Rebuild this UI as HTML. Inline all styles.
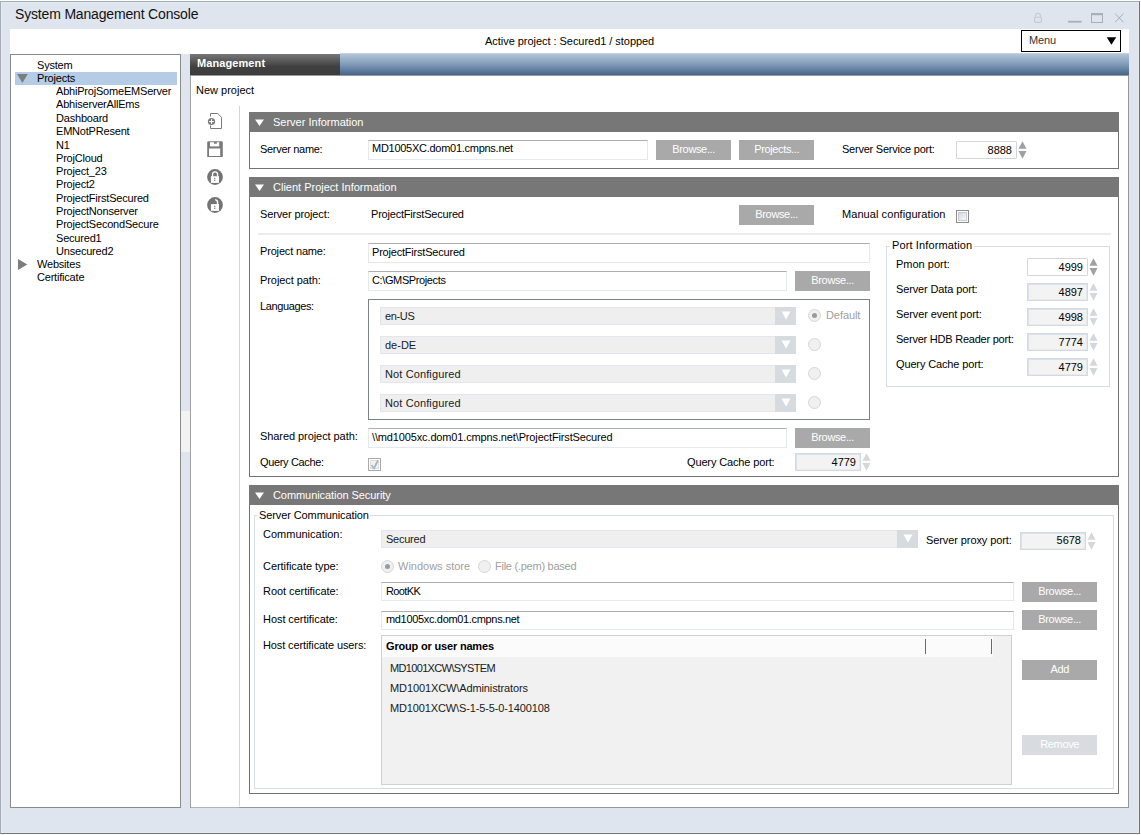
<!DOCTYPE html>
<html><head><meta charset="utf-8">
<style>
html,body{margin:0;padding:0;width:1141px;height:835px;overflow:hidden;background:#fff;}
*{box-sizing:border-box;}
.a{position:absolute;}
.t{position:absolute;font-family:"Liberation Sans",sans-serif;font-size:11px;line-height:13px;white-space:nowrap;color:#000;}
.hdr{position:absolute;background:#777;height:20px;}
.box{position:absolute;border:1px solid #727272;background:#fff;}
.inp{position:absolute;border:1px solid #abadb3;border-color:#abadb3 #e3e9ef #e3e9ef #e3e9ef;background:#fff;}
.dis{position:absolute;border:1px solid #d4dae1;background:#f3f3f3;box-shadow:inset 1px 1px 0 #d9e2ec, inset -1px -1px 0 #e6e9ed;}
.btn{position:absolute;background:#a9a9a9;color:#fff;font-family:"Liberation Sans",sans-serif;font-size:11px;line-height:19px;text-align:center;white-space:nowrap;letter-spacing:-0.35px;text-indent:0.35px;}
.combo{position:absolute;background:#efefef;border:1px solid #e3e6ea;}
.radio{position:absolute;width:13px;height:13px;border-radius:50%;border:1px solid #d6d6d6;background:#f0f0f0;}
.grp{position:absolute;border:1px solid #d8dde2;}
</style></head><body>
<!-- window -->
<div class="a" style="left:0;top:1px;width:1140px;height:833px;border:1px solid;border-color:#a4acb6 #707479 #747474 #a6acb4;background:#dfe5ef;box-shadow:inset 1px 1px 0 #e4e9f2, inset -1px -1px 0 #e6ebf3;"></div>
<div class="t" style="left:15px;top:6px;font-size:14px;letter-spacing:-0.17px;line-height:17px;color:#111;">System Management Console</div>

<!-- title bar icons -->
<svg class="a" style="left:1030px;top:10px;" width="100" height="16">
 <path d="M5.6,7 V5.6 A2.4,2.4 0 0 1 10.4,5.6 V7" fill="none" stroke="#c3cad3" stroke-width="1.1"/>
 <rect x="4.6" y="7.2" width="6.8" height="5.2" rx="0.8" fill="none" stroke="#c3cad3" stroke-width="1.1"/>
 <rect x="38" y="10.8" width="13.6" height="1.8" fill="#a8afb8"/>
 <rect x="61.5" y="3.5" width="11" height="9" fill="none" stroke="#a8afb8" stroke-width="1"/>
 <rect x="61" y="3" width="12" height="2.2" fill="#a8afb8"/>
 <path d="M85.2,3.6 L93.4,12.2 M93.4,3.6 L85.2,12.2" stroke="#a8afb8" stroke-width="1"/>
</svg>

<!-- white header strip -->
<div class="a" style="left:10px;top:29px;width:1119px;height:25px;background:#fff;"></div>
<div class="t" style="left:485px;top:35px;letter-spacing:-0.04px;">Active project : Secured1 / stopped</div>
<div class="a" style="left:1021px;top:30px;width:100px;height:22px;border:1px solid #000;background:#fff;"></div>
<div class="t" style="left:1029px;top:34px;color:#333;letter-spacing:-0.13px;">Menu</div>
<svg class="a" style="left:1106px;top:37px;" width="11" height="9"><polygon points="0.7,0.2 10.2,0.2 5.45,7.8" fill="#000"/></svg>


<!-- tree panel -->
<div class="box" style="left:10px;top:54px;width:171px;height:754px;border-color:#8a8a8a;"></div>
<div class="a" style="left:15px;top:72px;width:162px;height:13px;background:#b4cce6;"></div>

<!-- tree items -->
<svg class="a" style="left:17px;top:74px;" width="12" height="10"><polygon points="0,0 10.8,0 5.4,9" fill="#7d7d7d"/></svg>
<svg class="a" style="left:18px;top:259px;" width="10" height="12"><polygon points="0,0 9.3,5.5 0,11" fill="#7d7d7d"/></svg>
<div class="t" style="left:37px;top:59px;letter-spacing:-0.2px;">System</div>
<div class="t" style="left:37px;top:72px;letter-spacing:-0.2px;">Projects</div>
<div class="t" style="left:56px;top:85px;letter-spacing:-0.2px;">AbhiProjSomeEMServer</div>
<div class="t" style="left:56px;top:98px;letter-spacing:-0.2px;">AbhiserverAllEms</div>
<div class="t" style="left:56px;top:112px;letter-spacing:-0.2px;">Dashboard</div>
<div class="t" style="left:56px;top:125px;letter-spacing:-0.2px;">EMNotPResent</div>
<div class="t" style="left:56px;top:139px;letter-spacing:-0.2px;">N1</div>
<div class="t" style="left:56px;top:152px;letter-spacing:-0.2px;">ProjCloud</div>
<div class="t" style="left:56px;top:165px;letter-spacing:-0.2px;">Project_23</div>
<div class="t" style="left:56px;top:178px;letter-spacing:-0.2px;">Project2</div>
<div class="t" style="left:56px;top:192px;letter-spacing:-0.2px;">ProjectFirstSecured</div>
<div class="t" style="left:56px;top:205px;letter-spacing:-0.2px;">ProjectNonserver</div>
<div class="t" style="left:56px;top:218px;letter-spacing:-0.2px;">ProjectSecondSecure</div>
<div class="t" style="left:56px;top:232px;letter-spacing:-0.2px;">Secured1</div>
<div class="t" style="left:56px;top:245px;letter-spacing:-0.2px;">Unsecured2</div>
<div class="t" style="left:37px;top:258px;letter-spacing:-0.2px;">Websites</div>
<div class="t" style="left:37px;top:271px;letter-spacing:-0.2px;">Certificate</div>

<!-- management panel -->
<div class="box" style="left:190px;top:54px;width:939px;height:754px;border-color:#969696;"></div>
<div class="a" style="left:190px;top:54px;width:150px;height:21px;background:linear-gradient(#777,#404040 60%,#3c3c3c);"></div>
<div class="a" style="left:340px;top:53px;width:789px;height:1px;background:#c8cfd8;"></div>
<div class="a" style="left:340px;top:54px;width:789px;height:21px;background:linear-gradient(#b3c5d9,#7f9ab8 50%,#46658b);"></div>
<div class="a" style="left:190px;top:75px;width:939px;height:1px;background:#9a9a9a;"></div>
<div class="t" style="left:197px;top:57px;font-weight:bold;color:#fff;letter-spacing:0.09px;">Management</div>
<div class="t" style="left:196px;top:84px;">New project</div>

<!-- toolbar icons -->
<svg class="a" style="left:203px;top:108px;" width="25" height="110">
 <g fill="none" stroke="#7a7a7a" stroke-width="1">
  <path d="M7.5,8.5 V5.5 H14.7 L18.5,9.3 V20.5 H7.5 V17.5"/>
 </g>
 <circle cx="8.5" cy="13.5" r="3.6" fill="#7a7a7a"/>
 <rect x="8" y="11.2" width="1.1" height="4.6" fill="#fff"/>
 <rect x="6.2" y="13" width="4.6" height="1.1" fill="#fff"/>
 <!-- save -->
 <path d="M4.2,34 L5,33.2 H19 L19.8,34 V49 H4.2 Z" fill="#7a7a7a"/>
 <rect x="7" y="34.2" width="9.2" height="4.2" fill="#fff"/>
 <rect x="11" y="34" width="2.8" height="1.7" fill="#7a7a7a"/>
 <rect x="6" y="40.5" width="11.2" height="7.5" fill="#fff"/>
 <!-- lock -->
 <circle cx="12" cy="69" r="7.9" fill="#747474"/>
 <path d="M9.55,68.4 V66.3 A2.5,2.5 0 0 1 14.55,66.3 V68.4" fill="none" stroke="#fff" stroke-width="1.3"/>
 <rect x="7.9" y="68.2" width="8.1" height="6.7" fill="#fff"/>
 <rect x="11.2" y="69.8" width="1.1" height="1.3" fill="#747474"/>
 <rect x="11.2" y="71.7" width="1.1" height="1.3" fill="#747474"/>
 <!-- unlock -->
 <circle cx="12" cy="97" r="7.9" fill="#747474"/>
 <path d="M14.55,96.4 V94.2 Q14.55,92.2 12.2,91.6" fill="none" stroke="#fff" stroke-width="1.4"/>
 <rect x="7.9" y="96.1" width="8.1" height="6.8" fill="#fff"/>
 <rect x="11.2" y="97.8" width="1.1" height="1.3" fill="#747474"/>
 <rect x="11.2" y="99.7" width="1.1" height="1.3" fill="#747474"/>
</svg>

<!-- vertical separator -->
<div class="a" style="left:190px;top:76px;width:1px;height:731px;background:#a2a2a2;"></div>
<div class="a" style="left:191px;top:807px;width:48px;height:1px;background:#b2b2b2;"></div>
<div class="a" style="left:239px;top:106px;width:1px;height:700px;background:#d4d4d4;"></div>
<div class="a" style="left:181px;top:411px;width:9px;height:41px;background:#f2f2f2;"></div>

<div class="box" style="left:249px;top:112px;width:870px;height:57px;"></div>
<div class="hdr" style="left:249px;top:112px;width:870px;"></div>
<svg class="a" style="left:255px;top:119px;" width="10" height="8"><polygon points="0,0.5 9,0.5 4.5,7" fill="#fff"/></svg>
<div class="t" style="left:273px;top:116px;color:#fff;">Server Information</div>
<div class="t" style="left:260px;top:143px;letter-spacing:-0.31px;">Server name:</div>
<div class="inp" style="left:368px;top:140px;width:280px;height:20px;"></div>
<div class="t" style="left:372px;top:142px;letter-spacing:-0.27px;">MD1005XC.dom01.cmpns.net</div>
<div class="btn" style="left:656px;top:140px;width:75px;height:20px;">Browse...</div>
<div class="btn" style="left:739px;top:140px;width:75px;height:20px;">Projects...</div>
<div class="t" style="left:842px;top:143px;letter-spacing:-0.23px;">Server Service port:</div>
<div class="a" style="left:956px;top:141px;width:61px;height:18px;border:1px solid #d6d6d6;border-radius:1px;"></div>
<div class="t" style="left:956px;top:144px;width:56px;text-align:right;">8888</div>
<svg class="a" style="left:1018px;top:141px;" width="10" height="18"><polygon points="4.5,0.2 8.5,7.8 0.5,7.8" fill="#a0a0a0"/><polygon points="0.5,10 8.5,10 4.5,17.7" fill="#a0a0a0"/></svg>
<div class="box" style="left:249px;top:177px;width:870px;height:300px;"></div>
<div class="hdr" style="left:249px;top:177px;width:870px;"></div>
<svg class="a" style="left:255px;top:184px;" width="10" height="8"><polygon points="0,0.5 9,0.5 4.5,7" fill="#fff"/></svg>
<div class="t" style="left:273px;top:181px;color:#fff;">Client Project Information</div>
<div class="t" style="left:260px;top:208px;letter-spacing:-0.13px;">Server project:</div>
<div class="t" style="left:371px;top:208px;letter-spacing:-0.2px;">ProjectFirstSecured</div>
<div class="btn" style="left:739px;top:205px;width:75px;height:20px;">Browse...</div>
<div class="t" style="left:842px;top:208px;letter-spacing:0.07px;">Manual configuration</div>
<div class="a" style="left:956px;top:210px;width:13px;height:13px;border:1px solid #8c8c8c;background:#fff;"></div>
<div class="a" style="left:958px;top:212px;width:9px;height:9px;border:1px solid #c8ccd2;background:linear-gradient(135deg,#d3d8df,#f8f8f8);"></div>
<div class="a" style="left:258px;top:233px;width:853px;height:2px;background:#ededed;"></div>
<div class="t" style="left:260px;top:245px;letter-spacing:-0.17px;">Project name:</div>
<div class="inp" style="left:368px;top:243px;width:502px;height:20px;"></div>
<div class="t" style="left:372px;top:246px;letter-spacing:-0.2px;">ProjectFirstSecured</div>
<div class="t" style="left:260px;top:274px;letter-spacing:-0.07px;">Project path:</div>
<div class="inp" style="left:368px;top:271px;width:419px;height:20px;"></div>
<div class="t" style="left:372px;top:274px;letter-spacing:-0.38px;">C:\GMSProjects</div>
<div class="btn" style="left:795px;top:271px;width:75px;height:20px;">Browse...</div>
<div class="t" style="left:260px;top:300px;letter-spacing:-0.37px;">Languages:</div>
<div class="a" style="left:368px;top:299px;width:502px;height:121px;border:1px solid #7c8188;"></div>
<div class="combo" style="left:380px;top:307px;width:416px;height:18px;"></div>
<div class="a" style="left:775px;top:307px;width:21px;height:18px;background:#d6dbe0;"></div>
<svg class="a" style="left:781px;top:311px;" width="10" height="9"><polygon points="0.5,0.5 9.5,0.5 5,8.5" fill="#fff"/></svg>
<div class="t" style="left:385px;top:310px;color:#1a1a1a;letter-spacing:-0.36px;">en-US</div>
<div class="radio" style="left:808px;top:309px;"></div>
<div class="combo" style="left:380px;top:336px;width:416px;height:18px;"></div>
<div class="a" style="left:775px;top:336px;width:21px;height:18px;background:#d6dbe0;"></div>
<svg class="a" style="left:781px;top:340px;" width="10" height="9"><polygon points="0.5,0.5 9.5,0.5 5,8.5" fill="#fff"/></svg>
<div class="t" style="left:385px;top:339px;color:#1a1a1a;">de-DE</div>
<div class="radio" style="left:808px;top:338px;"></div>
<div class="combo" style="left:380px;top:365px;width:416px;height:18px;"></div>
<div class="a" style="left:775px;top:365px;width:21px;height:18px;background:#d6dbe0;"></div>
<svg class="a" style="left:781px;top:369px;" width="10" height="9"><polygon points="0.5,0.5 9.5,0.5 5,8.5" fill="#fff"/></svg>
<div class="t" style="left:385px;top:368px;color:#1a1a1a;letter-spacing:0.12px;">Not Configured</div>
<div class="radio" style="left:808px;top:367px;"></div>
<div class="combo" style="left:380px;top:394px;width:416px;height:18px;"></div>
<div class="a" style="left:775px;top:394px;width:21px;height:18px;background:#d6dbe0;"></div>
<svg class="a" style="left:781px;top:398px;" width="10" height="9"><polygon points="0.5,0.5 9.5,0.5 5,8.5" fill="#fff"/></svg>
<div class="t" style="left:385px;top:397px;color:#1a1a1a;letter-spacing:0.12px;">Not Configured</div>
<div class="radio" style="left:808px;top:396px;"></div>
<div class="a" style="left:812px;top:313px;width:5px;height:5px;border-radius:50%;background:#9a9a9a;"></div>
<div class="t" style="left:826px;top:309px;color:#a0a0a0;letter-spacing:-0.08px;">Default</div>
<div class="t" style="left:260px;top:430px;letter-spacing:-0.07px;">Shared project path:</div>
<div class="inp" style="left:368px;top:428px;width:419px;height:20px;"></div>
<div class="t" style="left:372px;top:431px;letter-spacing:-0.14px;">\\md1005xc.dom01.cmpns.net\ProjectFirstSecured</div>
<div class="btn" style="left:795px;top:428px;width:75px;height:20px;">Browse...</div>
<div class="t" style="left:260px;top:456px;letter-spacing:-0.35px;">Query Cache:</div>
<div class="a" style="left:368px;top:458px;width:13px;height:13px;border:1px solid #aaaaaa;background:#fff;"></div>
<div class="a" style="left:370px;top:460px;width:9px;height:9px;border:1px solid #dedede;background:#f1f1f1;"></div>
<svg class="a" style="left:368px;top:458px;" width="13" height="13"><path d="M4,7.8 L6,10.3 L9.6,3" fill="none" stroke="#a4b7cb" stroke-width="1.8" stroke-linecap="round"/></svg>
<div class="t" style="left:687px;top:456px;letter-spacing:-0.14px;">Query Cache port:</div>
<div class="dis" style="left:795px;top:453px;width:66px;height:18px;"></div>
<div class="t" style="left:795px;top:456px;width:61px;text-align:right;">4779</div>
<svg class="a" style="left:862px;top:453px;" width="10" height="18"><polygon points="4.5,0.2 8.5,7.8 0.5,7.8" fill="#d3d8de"/><polygon points="0.5,10 8.5,10 4.5,17.7" fill="#d3d8de"/></svg>
<div class="grp" style="left:886px;top:246px;width:224px;height:141px;"></div>
<div class="a" style="left:890px;top:243px;width:84px;height:6px;background:#fff;"></div>
<div class="t" style="left:892px;top:239px;letter-spacing:0.12px;">Port Information</div>
<div class="t" style="left:896px;top:258px;">Pmon port:</div>
<div class="a" style="left:1027px;top:258px;width:61px;height:18px;border:1px solid #d6d6d6;border-radius:1px;"></div>
<div class="t" style="left:1027px;top:261px;width:56px;text-align:right;">4999</div>
<svg class="a" style="left:1089px;top:258px;" width="10" height="18"><polygon points="4.5,0.2 8.5,7.8 0.5,7.8" fill="#a0a0a0"/><polygon points="0.5,10 8.5,10 4.5,17.7" fill="#a0a0a0"/></svg>
<div class="t" style="left:896px;top:283px;letter-spacing:-0.13px;">Server Data port:</div>
<div class="dis" style="left:1027px;top:283px;width:61px;height:18px;"></div>
<div class="t" style="left:1027px;top:286px;width:56px;text-align:right;">4897</div>
<svg class="a" style="left:1089px;top:283px;" width="10" height="18"><polygon points="4.5,0.2 8.5,7.8 0.5,7.8" fill="#d3d8de"/><polygon points="0.5,10 8.5,10 4.5,17.7" fill="#d3d8de"/></svg>
<div class="t" style="left:896px;top:308px;letter-spacing:-0.10px;">Server event port:</div>
<div class="dis" style="left:1027px;top:308px;width:61px;height:18px;"></div>
<div class="t" style="left:1027px;top:311px;width:56px;text-align:right;">4998</div>
<svg class="a" style="left:1089px;top:308px;" width="10" height="18"><polygon points="4.5,0.2 8.5,7.8 0.5,7.8" fill="#d3d8de"/><polygon points="0.5,10 8.5,10 4.5,17.7" fill="#d3d8de"/></svg>
<div class="t" style="left:896px;top:333px;letter-spacing:-0.23px;">Server HDB Reader port:</div>
<div class="dis" style="left:1027px;top:333px;width:61px;height:18px;"></div>
<div class="t" style="left:1027px;top:336px;width:56px;text-align:right;">7774</div>
<svg class="a" style="left:1089px;top:333px;" width="10" height="18"><polygon points="4.5,0.2 8.5,7.8 0.5,7.8" fill="#d3d8de"/><polygon points="0.5,10 8.5,10 4.5,17.7" fill="#d3d8de"/></svg>
<div class="t" style="left:896px;top:358px;letter-spacing:-0.14px;">Query Cache port:</div>
<div class="dis" style="left:1027px;top:358px;width:61px;height:18px;"></div>
<div class="t" style="left:1027px;top:361px;width:56px;text-align:right;">4779</div>
<svg class="a" style="left:1089px;top:358px;" width="10" height="18"><polygon points="4.5,0.2 8.5,7.8 0.5,7.8" fill="#d3d8de"/><polygon points="0.5,10 8.5,10 4.5,17.7" fill="#d3d8de"/></svg>
<div class="box" style="left:249px;top:485px;width:870px;height:309px;"></div>
<div class="hdr" style="left:249px;top:485px;width:870px;"></div>
<svg class="a" style="left:255px;top:492px;" width="10" height="8"><polygon points="0,0.5 9,0.5 4.5,7" fill="#fff"/></svg>
<div class="t" style="left:273px;top:489px;color:#fff;letter-spacing:-0.07px;">Communication Security</div>
<div class="grp" style="left:254px;top:515px;width:860px;height:274px;"></div>
<div class="a" style="left:257px;top:512px;width:113px;height:6px;background:#fff;"></div>
<div class="t" style="left:259px;top:509px;letter-spacing:-0.10px;">Server Communication</div>
<div class="t" style="left:263px;top:528px;">Communication:</div>
<div class="combo" style="left:381px;top:530px;width:537px;height:18px;"></div>
<div class="a" style="left:897px;top:530px;width:21px;height:18px;background:#d6dbe0;"></div>
<svg class="a" style="left:903px;top:534px;" width="10" height="9"><polygon points="0.5,0.5 9.5,0.5 5,8.5" fill="#fff"/></svg>
<div class="t" style="left:386px;top:533px;color:#1a1a1a;letter-spacing:-0.24px;">Secured</div>
<div class="t" style="left:926px;top:534px;letter-spacing:-0.09px;">Server proxy port:</div>
<div class="dis" style="left:1020px;top:532px;width:66px;height:18px;"></div>
<div class="t" style="left:1020px;top:534px;width:61px;text-align:right;">5678</div>
<svg class="a" style="left:1087px;top:532px;" width="10" height="18"><polygon points="4.5,0.2 8.5,7.8 0.5,7.8" fill="#d3d8de"/><polygon points="0.5,10 8.5,10 4.5,17.7" fill="#d3d8de"/></svg>
<div class="t" style="left:263px;top:560px;letter-spacing:-0.05px;">Certificate type:</div>
<div class="radio" style="left:381px;top:560px;"></div>
<div class="a" style="left:385px;top:564px;width:5px;height:5px;border-radius:50%;background:#9a9a9a;"></div>
<div class="t" style="left:398px;top:560px;color:#a0a0a0;">Windows store</div>
<div class="radio" style="left:478px;top:560px;"></div>
<div class="t" style="left:495px;top:560px;color:#a0a0a0;letter-spacing:-0.25px;">File (.pem) based</div>
<div class="t" style="left:263px;top:585px;letter-spacing:-0.05px;">Root certificate:</div>
<div class="inp" style="left:381px;top:582px;width:633px;height:19px;"></div>
<div class="t" style="left:386px;top:585px;letter-spacing:-0.63px;">RootKK</div>
<div class="btn" style="left:1022px;top:582px;width:75px;height:20px;">Browse...</div>
<div class="t" style="left:263px;top:613px;letter-spacing:-0.06px;">Host certificate:</div>
<div class="inp" style="left:381px;top:611px;width:633px;height:19px;"></div>
<div class="t" style="left:386px;top:613px;letter-spacing:-0.33px;">md1005xc.dom01.cmpns.net</div>
<div class="btn" style="left:1022px;top:610px;width:75px;height:20px;">Browse...</div>
<div class="t" style="left:263px;top:639px;letter-spacing:-0.11px;">Host certificate users:</div>
<div class="a" style="left:381px;top:635px;width:631px;height:150px;border:1px solid #d0d0d0;background:#f1f1f1;"></div>
<div class="a" style="left:382px;top:636px;width:611px;height:21px;background:#fbfbfb;"></div>
<div class="a" style="left:925px;top:639px;width:1px;height:15px;background:#6a6a6a;"></div>
<div class="a" style="left:991px;top:639px;width:1px;height:15px;background:#6a6a6a;"></div>
<div class="t" style="left:386px;top:640px;font-weight:bold;letter-spacing:-0.18px;">Group or user names</div>
<div class="t" style="left:390px;top:662px;color:#1a1a1a;letter-spacing:-0.66px;">MD1001XCW\SYSTEM</div>
<div class="t" style="left:390px;top:682px;color:#1a1a1a;letter-spacing:-0.11px;">MD1001XCW\Administrators</div>
<div class="t" style="left:390px;top:702px;color:#1a1a1a;letter-spacing:-0.13px;">MD1001XCW\S-1-5-5-0-1400108</div>
<div class="btn" style="left:1022px;top:660px;width:75px;height:20px;">Add</div>
<div class="btn" style="left:1022px;top:735px;width:75px;height:20px;background:#d8dce0;">Remove</div>
</body></html>
